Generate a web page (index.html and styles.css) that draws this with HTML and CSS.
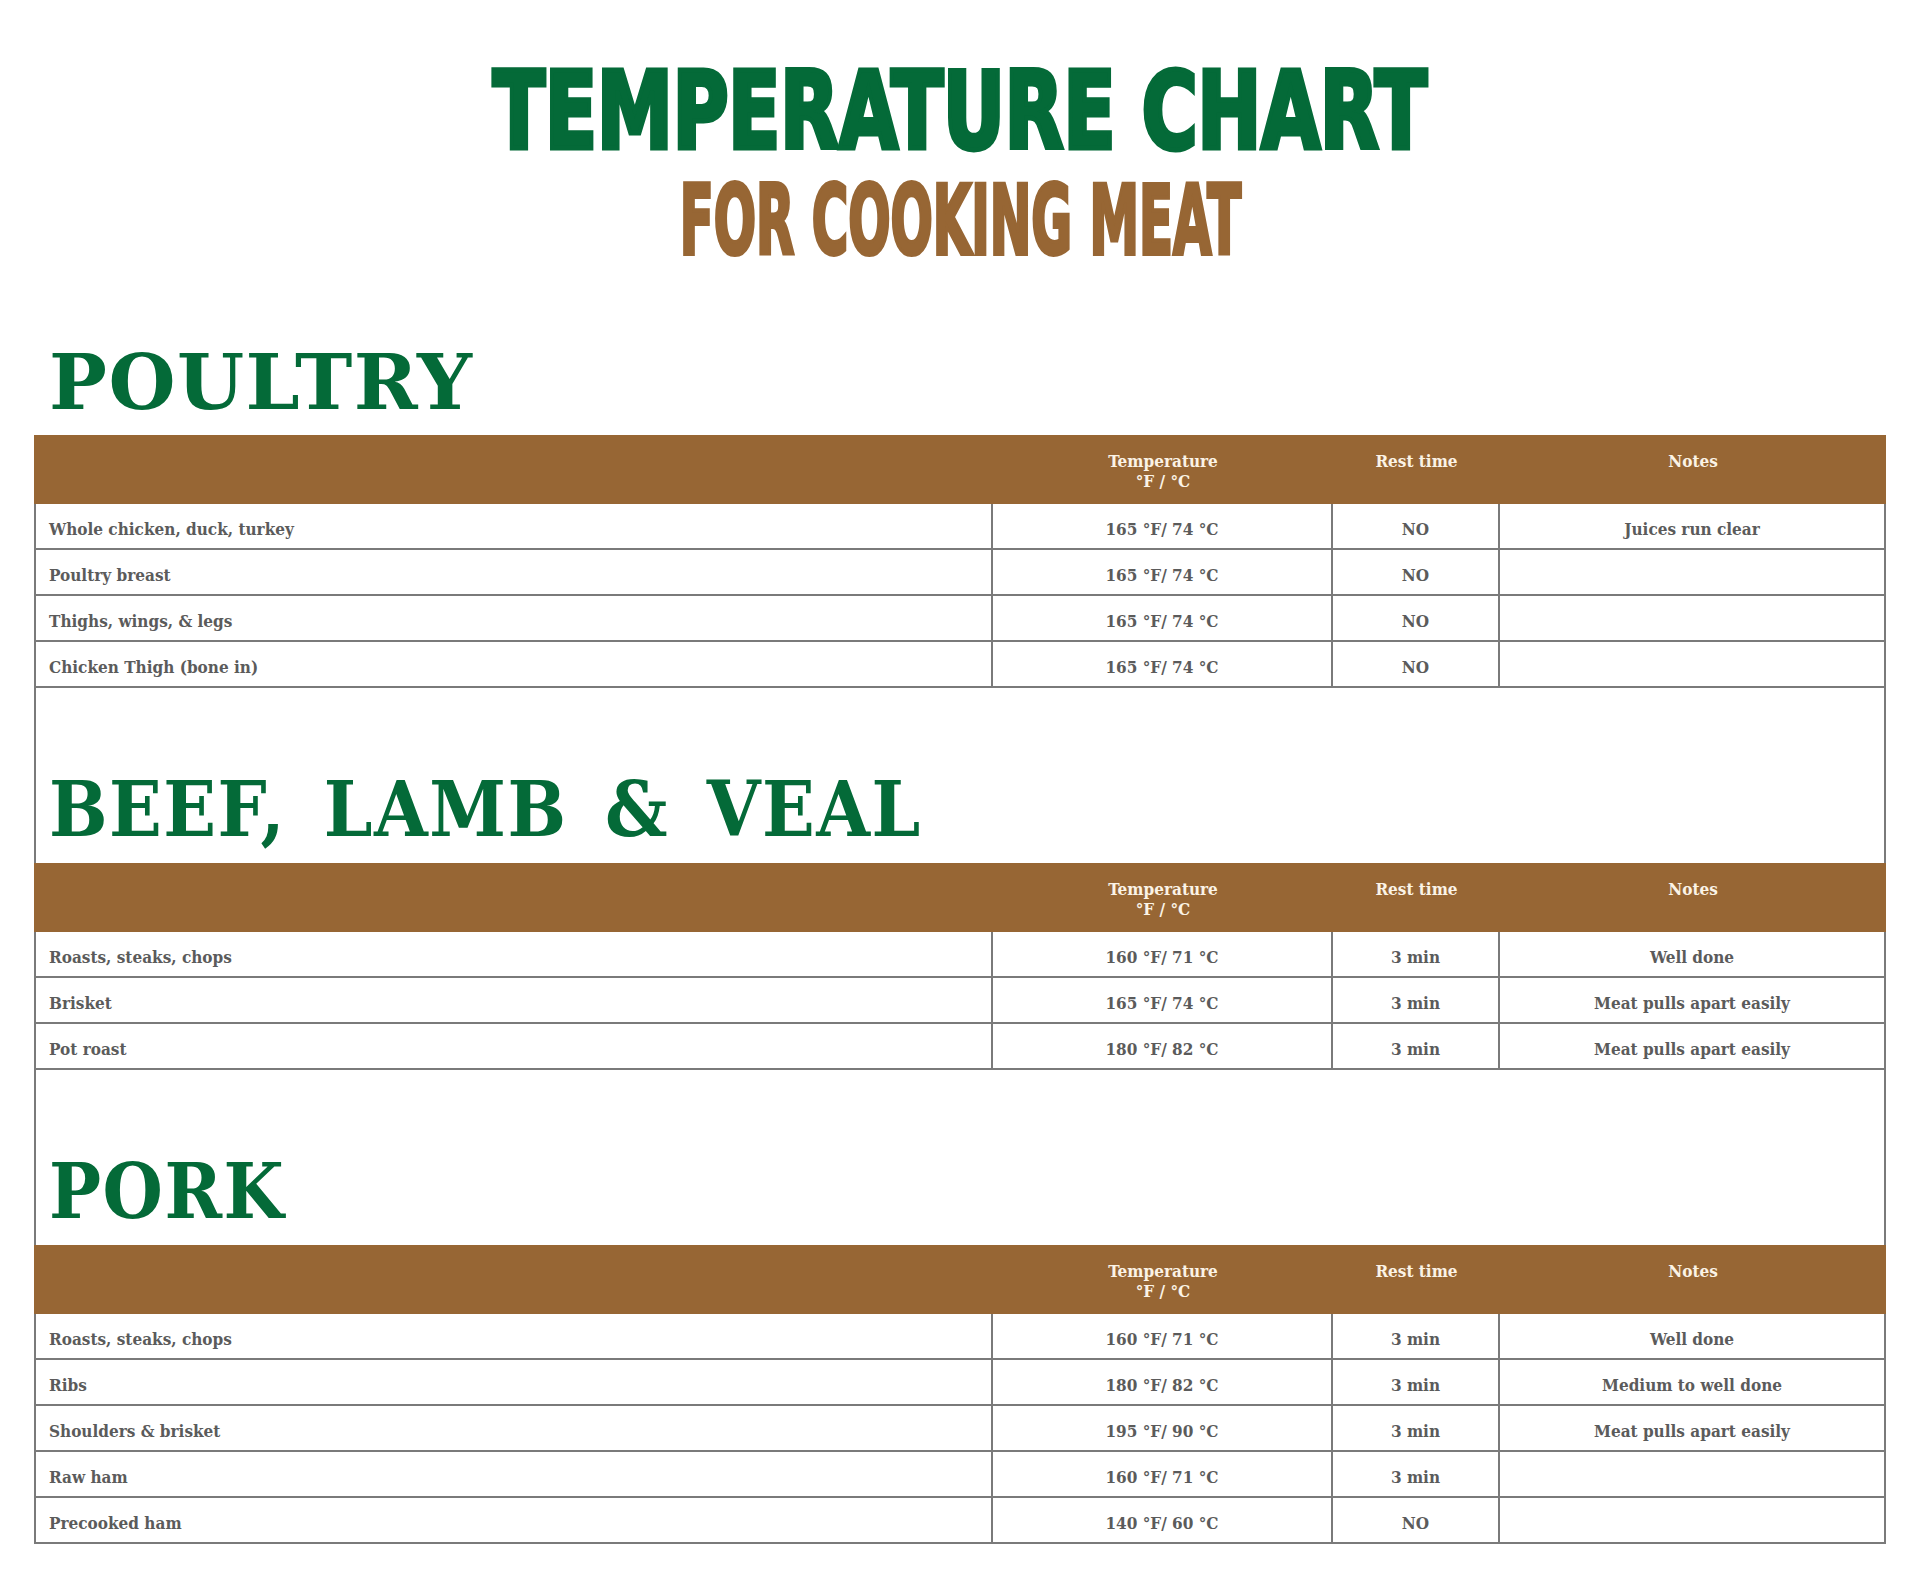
FILE: index.html
```html
<!DOCTYPE html>
<html lang="en">
<head>
<meta charset="utf-8">
<title>Temperature Chart for Cooking Meat</title>
<link rel="stylesheet" href="styles.css">
</head>
<body>
<header class="title">
  <h1 class="title-main"><span class="title-main-text">TEMPERATURE CHART</span></h1>
  <p class="title-sub"><span class="title-sub-text">FOR COOKING MEAT</span></p>
</header>
<main class="chart">
  <h2 class="section-title first">POULTRY</h2>
  <table class="temps">
    <colgroup>
      <col class="c-item"><col class="c-temp"><col class="c-rest"><col class="c-notes">
    </colgroup>
    <tbody>
      <tr class="head-row"><th></th><th>Temperature<br>°F / °C</th><th>Rest time</th><th>Notes</th></tr>
      <tr class="row"><td>Whole chicken, duck, turkey</td><td>165 °F/ 74 °C</td><td>NO</td><td>Juices run clear</td></tr>
      <tr class="row"><td>Poultry breast</td><td>165 °F/ 74 °C</td><td>NO</td><td></td></tr>
      <tr class="row"><td>Thighs, wings, &amp; legs</td><td>165 °F/ 74 °C</td><td>NO</td><td></td></tr>
      <tr class="row"><td>Chicken Thigh (bone in)</td><td>165 °F/ 74 °C</td><td>NO</td><td></td></tr>

      <tr class="section-row"><td colspan="4"><h2 class="section-title">BEEF, LAMB &amp; VEAL</h2></td></tr>
      <tr class="head-row"><th></th><th>Temperature<br>°F / °C</th><th>Rest time</th><th>Notes</th></tr>
      <tr class="row"><td>Roasts, steaks, chops</td><td>160 °F/ 71 °C</td><td>3 min</td><td>Well done</td></tr>
      <tr class="row"><td>Brisket</td><td>165 °F/ 74 °C</td><td>3 min</td><td>Meat pulls apart easily</td></tr>
      <tr class="row"><td>Pot roast</td><td>180 °F/ 82 °C</td><td>3 min</td><td>Meat pulls apart easily</td></tr>

      <tr class="section-row"><td colspan="4"><h2 class="section-title">PORK</h2></td></tr>
      <tr class="head-row"><th></th><th>Temperature<br>°F / °C</th><th>Rest time</th><th>Notes</th></tr>
      <tr class="row"><td>Roasts, steaks, chops</td><td>160 °F/ 71 °C</td><td>3 min</td><td>Well done</td></tr>
      <tr class="row"><td>Ribs</td><td>180 °F/ 82 °C</td><td>3 min</td><td>Medium to well done</td></tr>
      <tr class="row"><td>Shoulders &amp; brisket</td><td>195 °F/ 90 °C</td><td>3 min</td><td>Meat pulls apart easily</td></tr>
      <tr class="row"><td>Raw ham</td><td>160 °F/ 71 °C</td><td>3 min</td><td></td></tr>
      <tr class="row"><td>Precooked ham</td><td>140 °F/ 60 °C</td><td>NO</td><td></td></tr>
    </tbody>
  </table>
</main>
</body>
</html>
```

FILE: styles.css
```css
html, body {
  margin: 0;
  padding: 0;
  background: #ffffff;
}

body {
  width: 1920px;
  font-family: "DejaVu Serif", serif;
}

/* ---------- Title ---------- */
.title {
  text-align: center;
  padding-top: 58px;
}

.title-main {
  margin: 0;
  font-family: "DejaVu Sans Condensed", "DejaVu Sans", sans-serif;
  font-weight: bold;
  font-size: 107px;
  line-height: 107px;
  color: #046a38;
}

.title-main-text {
  display: inline-block;
  transform: scaleX(0.79);
  -webkit-text-stroke: 5px #046a38;
}

.title-sub {
  margin: 7px 0 0;
  font-family: "DejaVu Sans Condensed", "DejaVu Sans", sans-serif;
  font-weight: bold;
  font-size: 97px;
  line-height: 97px;
  color: #976634;
}

.title-sub-text {
  display: inline-block;
  transform: scaleX(0.57);
  -webkit-text-stroke: 4px #976634;
}

/* ---------- Sections ---------- */
.chart {
  padding: 0 0 40px 34px;
}

.section-title {
  margin: 0;
  font-family: "DejaVu Serif", serif;
  font-weight: bold;
  font-size: 77px;
  line-height: 77px;
  letter-spacing: 1.5px;
  word-spacing: 12px;
  color: #046a38;
}

.section-title.first {
  margin-top: 75px;
  padding-left: 15px;
}

/* ---------- Table ---------- */
.temps {
  width: 1852px;
  margin-top: 14px;
  table-layout: fixed;
  border-collapse: separate;
  border-spacing: 0;
  font-family: "DejaVu Serif Condensed", "DejaVu Serif", serif;
  font-stretch: semi-condensed;
  font-weight: bold;
  font-size: 17px;
  line-height: 20px;
}

.c-item { width: 959px; }
.c-temp { width: 340px; }
.c-rest { width: 167px; }
.c-notes { width: 386px; }

.head-row {
  height: 69px;
}

.head-row th {
  background: #976634;
  color: #fbf3e6;
  font-weight: bold;
  text-align: center;
  vertical-align: top;
  padding: 16px 0 0;
}

.row {
  height: 46px;
}

.row td {
  color: #5b5b5b;
  text-align: center;
  vertical-align: middle;
  padding: 6px 0 0;
  border-bottom: 2px solid #7a7a7a;
  border-right: 2px solid #7a7a7a;
}

.row td:first-child {
  text-align: left;
  padding-left: 13px;
  border-left: 2px solid #7a7a7a;
}

.section-row {
  height: 175px;
}

.section-row td {
  vertical-align: bottom;
  padding: 0 0 15px 13px;
  border-left: 2px solid #7a7a7a;
  border-right: 2px solid #7a7a7a;
}
```
